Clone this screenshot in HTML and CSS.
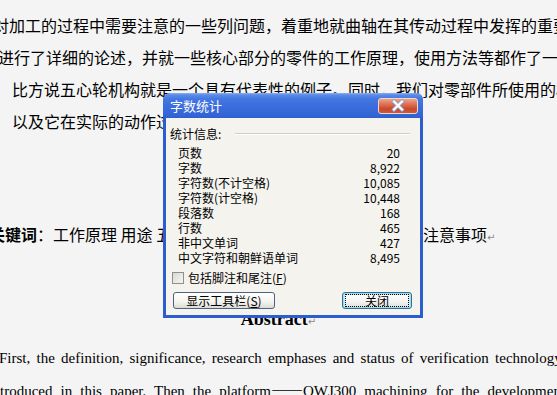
FILE: index.html
```html
<!DOCTYPE html>
<html lang="zh-CN">
<head>
<meta charset="utf-8">
<title>字数统计</title>
<link rel="stylesheet" href="styles.css">
</head>
<body>
<div class="doc">
  <div class="cn l1">对加工的过程中需要注意的一些列问题，着重地就曲轴在其传动过程中发挥的重要作用</div>
  <div class="cn l2">进行了详细的论述，并就一些核心部分的零件的工作原理，使用方法等都作了一介绍</div>
  <div class="cn l3">比方说五心轮机构就是一个具有代表性的例子。同时，我们对零部件所使用的材料</div>
  <div class="cn l4">以及它在实际的动作过程中所起的作用进行了分析。</div>
  <div class="cn kw"><b>关键词</b>：工作原理 用途 五心轮机构 曲轴传动机构 零部件材料 注意事项<span class="pm">↵</span></div>
  <div class="abs-title">Abstract<span class="pm">↵</span></div>
  <div class="en e1">First, the definition, significance, research emphases and status of verification technology</div>
  <div class="en e2">troduced in this paper. Then the platform<span class="dash">——</span>QWJ300 machining for the development</div>
</div>

<div class="dialog">
  <div class="title">
    <span class="title-text">字数统计</span>
    <span class="close">
      <svg width="40" height="16" viewBox="0 0 40 16">
        <path d="M16 3.5 L24 11.5 M24 3.5 L16 11.5" stroke="#8fa6d8" stroke-width="3.8" stroke-linecap="square" fill="none"/>
        <path d="M16 3.5 L24 11.5 M24 3.5 L16 11.5" stroke="#ffffff" stroke-width="2.2" stroke-linecap="square" fill="none"/>
      </svg>
    </span>
  </div>
  <div class="panel">
    <div class="head"><span>统计信息:</span><span class="rule"></span></div>
    <div class="stats">
      <span>页数</span><span class="num">20</span>
      <span>字数</span><span class="num">8,922</span>
      <span>字符数(不计空格)</span><span class="num">10,085</span>
      <span>字符数(计空格)</span><span class="num">10,448</span>
      <span>段落数</span><span class="num">168</span>
      <span>行数</span><span class="num">465</span>
      <span>非中文单词</span><span class="num">427</span>
      <span>中文字符和朝鲜语单词</span><span class="num">8,495</span>
    </div>
    <div class="check"><span class="box"></span><span>包括脚注和尾注(<u>F</u>)</span></div>
    <div class="buttons">
      <span class="btn btn-tool">显示工具栏(<u>S</u>)</span>
      <span class="btn btn-close"><span class="focus">关闭</span></span>
    </div>
  </div>
</div>
</body>
</html>
```

FILE: styles.css
```css
html, body {
  margin: 0;
  padding: 0;
}
body {
  width: 557px;
  height: 395px;
  overflow: hidden;
  position: relative;
  background: #f4f4f4;
  color: #000;
  font-family: "Noto Sans CJK SC", sans-serif;
}

.doc {
  padding-top: 9px;
}
.cn {
  font-size: 16px;
  line-height: 32px;
  height: 32px;
  white-space: nowrap;
}
.l1 { margin-left: -7px; }
.l2 { margin-left: -2px; }
.l3, .l4 { margin-left: 12px; }
.kw {
  margin-left: -11px;
  margin-top: 81px;
}
.kw b { font-weight: 700; }
.pm {
  color: #8a8a8a;
  font-size: 10px;
  font-family: "DejaVu Sans", sans-serif;
  font-weight: 400;
}

.abs-title {
  margin-top: 57px;
  text-align: center;
  font: bold 18px/24px "Liberation Serif", serif;
}
.en {
  font: 15px/31px "Liberation Serif", serif;
  white-space: nowrap;
}
.e1 {
  margin-top: 9px;
  margin-left: -1px;
  word-spacing: 2.5px;
}
.e2 {
  margin-left: 0;
  word-spacing: 4.3px;
}
.dash {
  font-family: "Noto Sans CJK SC", sans-serif;
  font-size: 16px;
}

/* dialog window */
.dialog {
  position: absolute;
  left: 163px;
  top: 93px;
  width: 260px;
  height: 225px;
  box-sizing: border-box;
  display: flex;
  flex-direction: column;
  background: #2b5dcf;
  border-radius: 7px 7px 0 0;
  font-size: 12px;
  line-height: 15px;
}
.title {
  flex: none;
  height: 25px;
  display: flex;
  align-items: center;
  justify-content: space-between;
  padding: 0 5px 0 7px;
  border-radius: 7px 7px 0 0;
  background: linear-gradient(#8db0f2 0, #5a8ae8 2px, #4377e2 6px, #3a6cdb 14px, #3465d6 22px, #2f5dcf 25px);
  color: #fff;
}
.title-text {
  font-size: 13px;
}
.close {
  width: 40px;
  height: 16px;
  box-sizing: border-box;
  border: 1px solid #f1d6cc;
  border-radius: 3px;
  background: linear-gradient(#eba38a 0, #dc6f52 40%, #c9482c 70%, #c9593c 100%);
  display: flex;
  margin-top: 1px;
}
.close svg {
  margin: -1px;
}

.panel {
  flex: 1;
  margin: 0 3px 3px;
  background: #f4f3ee;
  padding: 8px 8px 6px 4px;
  display: flex;
  flex-direction: column;
}
.head {
  display: flex;
  align-items: center;
  height: 15px;
  margin-right: 2px;
}
.rule {
  flex: 1;
  height: 1px;
  margin-left: 14px;
  background: #d0d0bf;
  border-bottom: 1px solid #fff;
}
.stats {
  margin: 4px 12px 0 8px;
  display: grid;
  grid-template-columns: 1fr auto;
}
.stats span {
  height: 15px;
  white-space: nowrap;
}
.num {
  text-align: right;
}
.check {
  margin: 5px 0 0 2px;
  display: flex;
  align-items: center;
  gap: 4px;
  height: 15px;
}
.box {
  width: 10px;
  height: 10px;
  border: 1px solid #8e8f8f;
  background: linear-gradient(135deg, #d8d8d2, #f6f6f4);
}
.buttons {
  margin-top: auto;
  margin-left: 3px;
  display: flex;
  justify-content: space-between;
}
.btn {
  height: 17px;
  box-sizing: border-box;
  display: flex;
  align-items: center;
  justify-content: center;
  border: 1px solid #4d6185;
  border-radius: 3px;
  background: linear-gradient(#ffffff 0, #f3f3ef 60%, #dcdad3 100%);
}
.btn-tool {
  width: 102px;
}
.btn-close {
  width: 70px;
  border-color: #2f6f9a;
  box-shadow: inset 0 0 0 1px #9fdcf0, inset 0 0 0 2px #c3ebf6;
}
.focus {
  width: 62px;
  height: 11px;
  line-height: 11px;
  text-align: center;
  outline: 1px dotted #000;
}
```
